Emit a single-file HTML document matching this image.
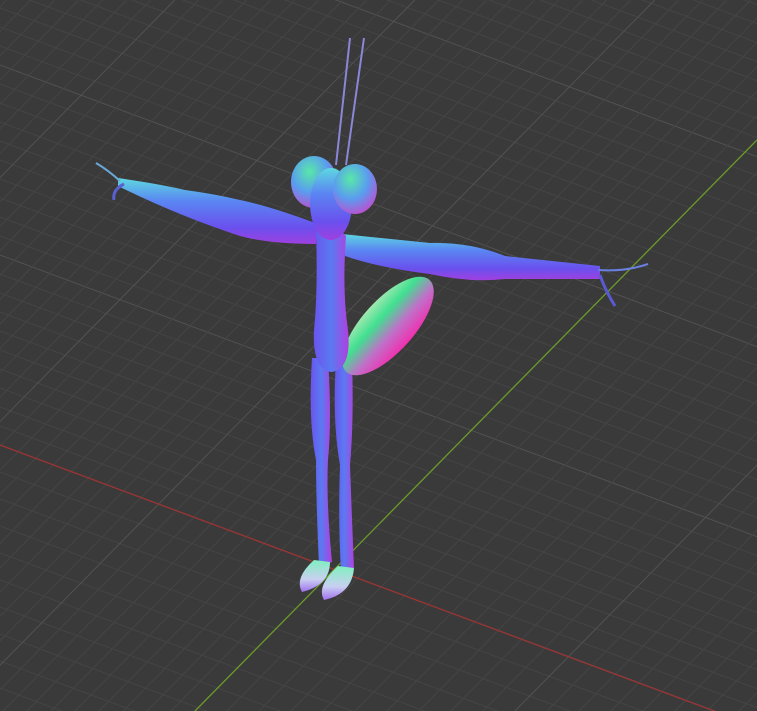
<!DOCTYPE html>
<html><head><style>
html,body{margin:0;padding:0;background:#3a3a3a;width:757px;height:711px;overflow:hidden}
svg{position:absolute;left:0;top:0}
</style></head><body>
<svg id="s" width="757" height="711" viewBox="0 0 757 711" xmlns="http://www.w3.org/2000/svg">
<defs>
<linearGradient id="b" x1="0" y1="0" x2="0" y2="1">
<stop offset="0" stop-color="#5ed8e0"/><stop offset="0.35" stop-color="#5a86f2"/><stop offset="0.75" stop-color="#6a50ee"/><stop offset="1" stop-color="#a040e0"/></linearGradient>
<linearGradient id="v" x1="0" y1="0" x2="1" y2="0">
<stop offset="0" stop-color="#6a54ee"/><stop offset="0.5" stop-color="#5a7af2"/><stop offset="1" stop-color="#b040e0"/></linearGradient>
<linearGradient id="ab" x1="0.5" y1="0" x2="0.5" y2="1">
<stop offset="0" stop-color="#a0e8b0"/><stop offset="0.3" stop-color="#40e090"/><stop offset="0.65" stop-color="#c070c8"/><stop offset="1" stop-color="#f030b0"/></linearGradient>
<radialGradient id="eye" cx="0.4" cy="0.3" r="0.8">
<stop offset="0" stop-color="#58e8a8"/><stop offset="0.5" stop-color="#5a9cf0"/><stop offset="1" stop-color="#d040c8"/></radialGradient>
<linearGradient id="ft" x1="0" y1="0" x2="0" y2="1">
<stop offset="0" stop-color="#80f0c0"/><stop offset="0.6" stop-color="#c8d0f0"/><stop offset="1" stop-color="#a070f0"/></linearGradient>
</defs>
<g id="grid" stroke-width="1"></g>
<line x1="0" y1="445" x2="757" y2="727" stroke="#9a3434" stroke-width="1.3"/>
<line x1="757" y1="140" x2="195" y2="711" stroke="#6a9a2a" stroke-width="1.3"/>
<line x1="336" y1="165" x2="350" y2="38" stroke="#8a86d8" stroke-width="2"/>
<line x1="346" y1="165" x2="364" y2="38" stroke="#8a86d8" stroke-width="2"/>
<path d="M118,178 Q160,184 185,190 Q215,194 240,200 Q270,206 318,224 L316,244 Q270,244 240,236 Q210,226 185,216 Q150,202 118,186 Z" fill="url(#b)"/>
<path d="M120,181 Q108,170 96,163" stroke="#6aa8d8" stroke-width="2" fill="none"/>
<path d="M124,184 Q112,190 114,200" stroke="#5a60d0" stroke-width="3" fill="none"/>
<path d="M342,234 Q380,238 430,243 Q470,242 505,256 L600,266 L600,279 L505,279 Q470,283 430,274 Q380,268 345,256 Z" fill="url(#b)"/>
<path d="M598,270 Q625,272 648,264" stroke="#6a80e0" stroke-width="2" fill="none"/>
<path d="M600,275 Q605,290 615,306" stroke="#5a5ad0" stroke-width="3" fill="none"/>
<path d="M312,358 L328,358 Q332,420 328,460 Q326,500 332,562 L319,566 Q316,500 316,460 Q308,420 312,358 Z" fill="url(#v)"/>
<path d="M336,360 L352,360 Q354,420 350,465 Q352,520 354,568 L341,572 Q338,520 340,465 Q332,420 336,360 Z" fill="url(#v)"/>
<path d="M314,560 L330,562 Q330,585 302,592 Q294,578 314,560 Z" fill="url(#ft)"/>
<path d="M338,566 L354,568 Q352,594 324,600 Q316,586 338,566 Z" fill="url(#ft)"/>
<ellipse cx="388" cy="326" rx="62" ry="26" transform="rotate(-48 388 326)" fill="url(#ab)"/>
<path d="M316,232 Q334,222 346,236 Q342,290 348,330 Q352,368 332,372 Q312,370 314,330 Q318,290 316,232 Z" fill="url(#v)"/>
<ellipse cx="314" cy="182" rx="23" ry="26" fill="url(#eye)"/>
<ellipse cx="331" cy="204" rx="21" ry="36" fill="url(#b)"/>
<ellipse cx="355" cy="189" rx="22" ry="25" fill="url(#eye)"/>
</svg>
<script>
var g=document.getElementById('grid'),ns='http://www.w3.org/2000/svg';
function L(x1,y1,x2,y2,c){var l=document.createElementNS(ns,'line');l.setAttribute('x1',x1);l.setAttribute('y1',y1);l.setAttribute('x2',x2);l.setAttribute('y2',y2);l.setAttribute('stroke',c);g.appendChild(l);}
for(var k=-40;k<40;k++){var b=445+k*(k<0?19:27);var c=(k%10==0)?'#525252':'#454545';L(-10,b-3.7,770,b+0.372*770,c);}
for(var k=-40;k<40;k++){var x0=757+k*(k<0?24:32);var c=(k%10==0)?'#525252':'#454545';L(x0+140/1.016,0,x0-571/1.016,711,c);}
</script>
</body></html>
